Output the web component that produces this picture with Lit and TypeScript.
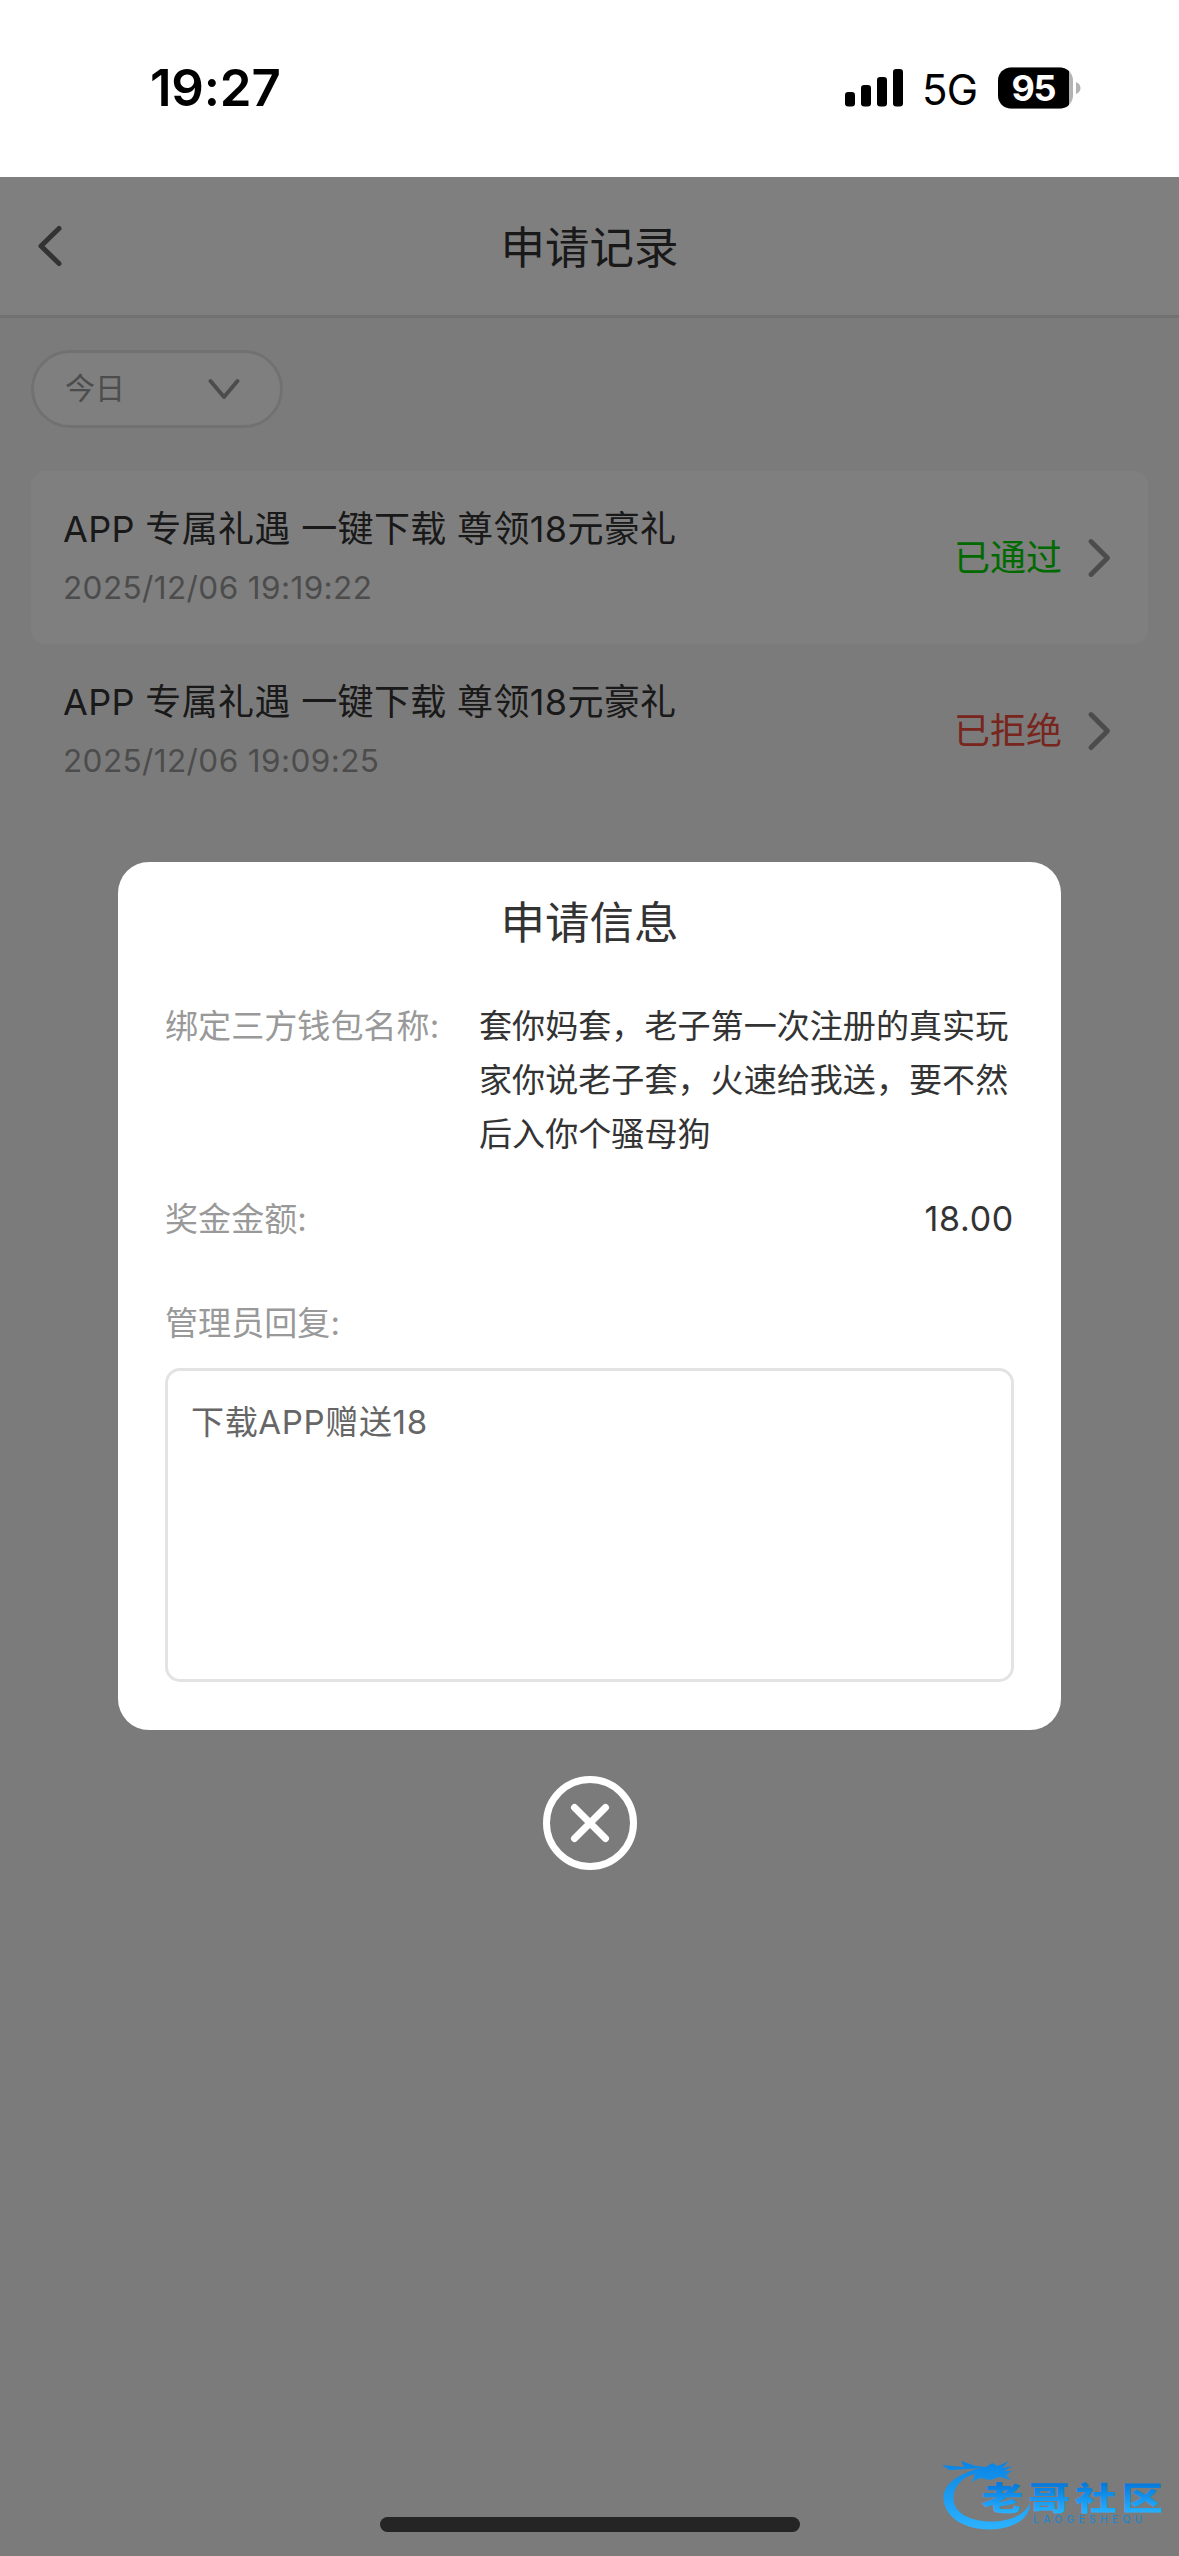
import { LitElement, html, css, svg } from "lit";
import { customElement, property } from "lit/decorators.js";

interface RecordItem {
  title: string;
  time: string;
  status: string;
  kind: "pass" | "reject";
}

const RECORDS: RecordItem[] = [
  { title: "APP 专属礼遇 一键下载 尊领18元豪礼", time: "2025/12/06 19:19:22", status: "已通过", kind: "pass" },
  { title: "APP 专属礼遇 一键下载 尊领18元豪礼", time: "2025/12/06 19:09:25", status: "已拒绝", kind: "reject" },
];

@customElement("status-bar")
class StatusBar extends LitElement {
  static styles = css`
    :host {
      display: flex;
      justify-content: space-between;
      align-items: flex-start;
      height: 177px;
      box-sizing: border-box;
      padding: 58px 98px 0 150px;
      background: #fff;
      color: #000;
    }
    .time {
      font-size: 51px;
      font-weight: 600;
      line-height: 60px;
      letter-spacing: -0.2px;
    }
    .right {
      display: flex;
      align-items: center;
      height: 60px;
    }
    .signal {
      width: 58px;
      height: 38px;
      margin-right: 19px;
    }
    .net {
      font-size: 42px;
      line-height: 60px;
      width: 76px;
      padding-top: 3px;
      letter-spacing: -0.8px;
    }
    .battery {
      width: 83px;
      height: 42px;
    }
  `;
  render() {
    return html`
      <div class="time">19:27</div>
      <div class="right">
        <svg class="signal" viewBox="0 0 58 38">
          <rect x="0" y="23" width="10" height="14.5" rx="3.2" />
          <rect x="16" y="16" width="10" height="21.5" rx="3.2" />
          <rect x="32" y="8" width="10" height="29.5" rx="3.2" />
          <rect x="48" y="0" width="10" height="37.5" rx="3.2" />
        </svg>
        <div class="net">5G</div>
        <svg class="battery" viewBox="0 0 83 42">
          <defs>
            <clipPath id="shell"><rect x="0" y="0.5" width="75" height="41" rx="13" /></clipPath>
          </defs>
          <g clip-path="url(#shell)">
            <rect width="75" height="42" fill="#b3b3b3" />
            <rect width="71" height="42" fill="#000" />
          </g>
          <path d="M78 15 Q82.5 17 82.5 21 Q82.5 25 78 27Z" fill="#b3b3b3" />
          <text x="36" y="33.8" text-anchor="middle" fill="#fff" font-size="36" font-weight="700" textLength="45">95</text>
        </svg>
      </div>
    `;
  }
}

@customElement("record-row")
class RecordRow extends LitElement {
  @property({ attribute: false }) item!: RecordItem;
  static styles = css`
    :host {
      display: flex;
      justify-content: space-between;
      height: 173px;
      box-sizing: border-box;
      padding: 32px 35px 0 32px;
      border-radius: 15px;
    }
    .title {
      font-size: 36px;
      line-height: 52px;
      color: #333;
      letter-spacing: 0.35px;
      white-space: nowrap;
    }
    .time {
      margin-top: 8px;
      font-size: 31.5px;
      line-height: 50px;
      color: #999;
      letter-spacing: 0.4px;
    }
    .side {
      display: flex;
      align-items: center;
      height: 110px;
    }
    .status {
      font-size: 36px;
      line-height: 52px;
    }
    .pass {
      color: #00d400;
    }
    .reject {
      color: #f04a3c;
    }
    .arrow {
      width: 26px;
      height: 40px;
      margin-left: 25px;
    }
  `;
  render() {
    const r = this.item;
    return html`
      <div>
        <div class="title">${r.title}</div>
        <div class="time">${r.time}</div>
      </div>
      <div class="side">
        <div class="status ${r.kind}">${r.status}</div>
        <svg class="arrow" viewBox="0 0 26 40">
          <path d="M4 3.6 L20.5 20 L4 36.4" fill="none" stroke="#999" stroke-width="5" stroke-linecap="round" stroke-linejoin="round" />
        </svg>
      </div>
    `;
  }
}

@customElement("info-dialog")
class InfoDialog extends LitElement {
  static styles = css`
    :host {
      display: flex;
      flex-direction: column;
      align-items: center;
    }
    .panel {
      width: 943px;
      height: 868px;
      box-sizing: border-box;
      padding: 31px 47px 0;
      border-radius: 31px;
      background: #fff;
      font-size: 33.1px;
      line-height: 54px;
      color: #333;
    }
    .title {
      font-size: 44.5px;
      line-height: 60px;
      text-align: center;
    }
    .row {
      display: flex;
      justify-content: space-between;
    }
    .first {
      margin-top: 46px;
    }
    .amount {
      margin-top: 31px;
    }
    .label {
      color: #999;
      white-space: nowrap;
    }
    .value {
      width: 535px;
    }
    .money {
      font-size: 34px;
      letter-spacing: 0.7px;
    }
    .reply {
      margin-top: 50px;
    }
    .box {
      margin-top: 18px;
      height: 314px;
      box-sizing: border-box;
      padding: 24px 23px;
      border: 3px solid #e3e3e3;
      border-radius: 15px;
      color: #666;
      letter-spacing: 0.6px;
    }
    .close {
      display: block;
      width: 94px;
      height: 94px;
      margin-top: 46px;
    }
  `;
  render() {
    return html`
      <div class="panel">
        <div class="title">申请信息</div>
        <div class="row first">
          <div class="label">绑定三方钱包名称:</div>
          <div class="value">套你妈套，老子第一次注册的真实玩家你说老子套，火速给我送，要不然后入你个骚母狗</div>
        </div>
        <div class="row amount">
          <div class="label">奖金金额:</div>
          <div class="money">18.00</div>
        </div>
        <div class="label reply">管理员回复:</div>
        <div class="box">下载APP赠送18</div>
      </div>
      <svg class="close" viewBox="0 0 94 94">
        <g fill="none" stroke="#fff">
          <circle cx="47" cy="47" r="43.5" stroke-width="7" />
          <path d="M31.5 31.5 L62.5 62.5 M62.5 31.5 L31.5 62.5" stroke-width="7" stroke-linecap="round" />
        </g>
      </svg>
    `;
  }
}

@customElement("brand-mark")
class BrandMark extends LitElement {
  static styles = css`
    :host {
      display: block;
    }
    .mark {
      display: block;
      width: 237px;
      height: 94px;
    }
    .name {
      font-family: "Noto Sans CJK SC", sans-serif;
      font-weight: 900;
      font-size: 32px;
    }
    .latin {
      font-family: Inter, sans-serif;
      font-weight: 500;
      font-size: 10px;
    }
  `;
  render() {
    const chars = ["老", "哥", "社", "区"];
    return html`
      <svg class="mark" viewBox="0 0 237 94">
        <defs>
          <linearGradient id="ring" gradientUnits="userSpaceOnUse" x1="0" y1="20" x2="0" y2="86">
            <stop offset="0" stop-color="#0a84e4" />
            <stop offset="1" stop-color="#2bb2ff" />
          </linearGradient>
          <linearGradient id="ink" gradientUnits="userSpaceOnUse" x1="0" y1="42" x2="0" y2="71">
            <stop offset="0" stop-color="#0679dc" />
            <stop offset="1" stop-color="#26b2ff" />
          </linearGradient>
        </defs>
        <path
          fill="url(#ring)"
          d="M38 26 C20 31 1 40 1.5 57 C3 76 23 87.500 48 87.500 C70 87 86 78 88 64 L88 61 C82 74 66 79.500 49 79.500 C28 79.500 12 71 11.500 57 C11 45 20 35 33 32 L30 40 L38 36 L48 38 L58 35 L69 38 L64 33 L70 29 L62 29 L71 24 L60 26 L67 19 L56 24 L50 21 L44 25 L34 24 L19 19 L22 25 L0 23 L7 28 L28 27 Z"
        />
        ${chars.map(
          (c, i) => svg`<g transform="translate(${39.5 + i * 46.7} 0) scale(1.3 1)"><text class="name" x="0" y="68.500" fill="url(#ink)">${c}</text></g>`,
        )}
        <text class="latin" x="91" y="80.500" fill="#2186cc" textLength="109">LAOGESHEQU</text>
      </svg>
    `;
  }
}

@customElement("app-root")
class AppRoot extends LitElement {
  static styles = css`
    :host {
      display: block;
      position: relative;
      width: 1179px;
      height: 2556px;
      overflow: hidden;
      background: #f7f7f7;
      font-family: Inter, "Noto Sans CJK SC", sans-serif;
    }
    .header {
      display: grid;
      grid-template-columns: 100px 1fr 100px;
      align-items: center;
      height: 141px;
      box-sizing: border-box;
      border-bottom: 3px solid #e3e3e3;
      background: #fff;
    }
    .back {
      width: 30px;
      height: 44px;
      margin-left: 35px;
    }
    .heading {
      text-align: center;
      font-size: 44.5px;
      line-height: 60px;
      color: #333;
      padding-top: 3px;
    }
    .content {
      padding: 32px 31px;
    }
    .filter {
      display: flex;
      justify-content: space-between;
      align-items: center;
      width: 252px;
      height: 78px;
      box-sizing: border-box;
      padding: 0 38px 0 31px;
      border: 3px solid #e3e3e3;
      border-radius: 39px;
      background: #fff;
      color: #999;
      font-size: 30px;
      line-height: 44px;
    }
    .filter span {
      padding-bottom: 3px;
    }
    .caret {
      width: 36px;
      height: 24px;
    }
    .list {
      margin-top: 43px;
    }
    .odd {
      background: #fff;
    }
    .mask {
      position: absolute;
      inset: 177px 0 0;
      background: rgba(0, 0, 0, 0.5);
      padding-top: 685px;
    }
    .home {
      position: absolute;
      left: 380px;
      top: 2517px;
      width: 420px;
      height: 15px;
      border-radius: 8px;
      background: #252525;
    }
    .brand {
      position: absolute;
      left: 942px;
      top: 2442px;
    }
  `;
  render() {
    return html`
      <status-bar></status-bar>
      <div class="header">
        <svg class="back" viewBox="0 0 30 44">
          <path d="M24 4.500 L6 22 L24 39.500" fill="none" stroke="#666" stroke-width="5" stroke-linecap="round" stroke-linejoin="round" />
        </svg>
        <div class="heading">申请记录</div>
      </div>
      <div class="content">
        <div class="filter">
          <span>今日</span>
          <svg class="caret" viewBox="0 0 36 24">
            <path d="M4.500 4 L18 20 L31.500 4" fill="none" stroke="#999" stroke-width="4" stroke-linecap="round" stroke-linejoin="round" />
          </svg>
        </div>
        <div class="list">
          ${RECORDS.map((r, i) => html`<record-row class=${i % 2 ? "even" : "odd"} .item=${r}></record-row>`)}
        </div>
      </div>
      <div class="mask"><info-dialog></info-dialog></div>
      <brand-mark class="brand"></brand-mark>
      <div class="home"></div>
    `;
  }
}
